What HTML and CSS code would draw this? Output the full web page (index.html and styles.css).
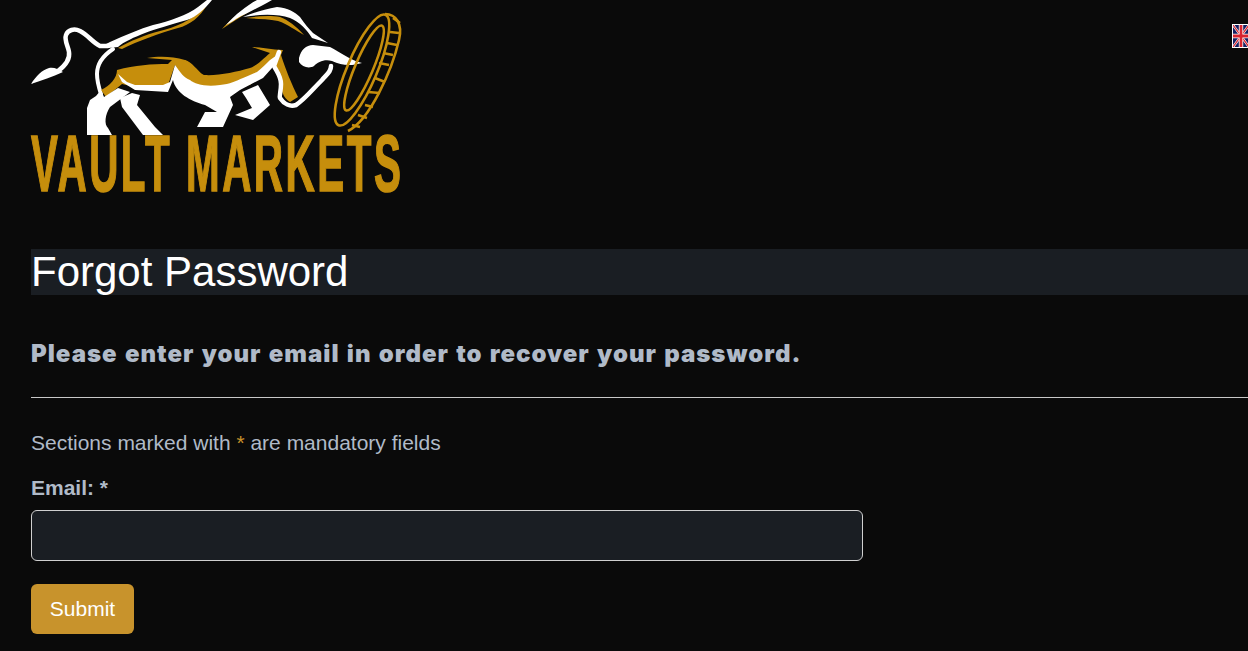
FILE: index.html
```html
<!DOCTYPE html>
<html lang="en">
<head>
<meta charset="utf-8">
<title>Forgot Password</title>
<link rel="stylesheet" href="styles.css">
</head>
<body>
<main class="page">
  <header class="top">
    <svg class="logo" viewBox="31 0 371 192" width="371" height="192" role="img" aria-label="Vault Markets">
      <g class="art">
        <!-- tail and back line -->
        <path class="fill-w" d="M31 84 C36 76 42 70 49 68 C54 67 58 69 63 72 C52 77 42 80 31 84 Z"/>
        <path class="line-w tail" d="M58 71 C66 65 70 58 69 52 C68 46 64 40 66 35 C68 30 74 28 80 31 C88 35 92 42 100 46 L108 46"/>
        <path class="fill-g" d="M118 48 C130 41 145 35 160 31 C175 27 190 22 207 5 C200 17 190 25 178 28 C160 33 138 41 122 49 Z"/>
        <path class="fill-w" d="M104 45 L110 42 C125 35 140 29 153 25 C170 21 187 15 198 7 L207 0 L212 0 C205 9 196 17 187 20 C170 25 155 29 145 33 C135 37 123 42 118 47 L108 48 Z"/>
        <!-- rear arc and leg -->
        <path class="line-w arc" d="M113 49 C104 55 97 64 97 74 C97 82 99 88 101 94"/>
        <!-- gold body -->
        <path class="fill-g" d="M117 70 C135 65 152 64 168 64 L172 60 L147 58 C158 56 172 56 185 60 C192 62 197 70 203 75 L214 82 L180 82 L175 65 L168 85 L135 87 L122 84 L106 97 L101 90 C110 86 117 78 117 70 Z"/>
        <path class="fill-g" d="M185 60 C193 64 197 72 204 75 C218 76 236 72 250 68 C258 65 264 58 270 53 L252 47 C262 47 272 50 283 50 L281 55 C285 68 292 85 298 97 L290 102 C283 98 281 90 280 80 C278 72 276 65 272 62 L250 85 L205 88 L190 82 L180 70 Z"/>
        <!-- white belly band -->
        <path class="fill-w" d="M118 74 L127 82 L135 85 L163 85 L170 82 L175 65 C180 72 184 78 190 80 C195 84 205 87 220 85 C230 84 236 81 243 78 C248 76 252 74 257 72 C262 68 266 64 270 60 L280 53 L272 68 L263 78 L240 90 L230 97 L233 105 L223 127 L197 127 L205 112 L217 112 L205 105 C190 101 176 93 173 80 L168 92 L135 90 L122 82 Z"/>
        <!-- rear leg -->
        <path class="fill-w" d="M101 90 L104 97 L118 88 L130 92 L110 107 C105 115 104 124 108 128 L112 135 L87 135 L87 108 L90 100 L96 96 Z"/>
        <!-- middle leg -->
        <path class="fill-w" d="M120 98 L132 93 L140 95 L137 105 L155 127 L163 135 L143 135 L122 107 Z"/>
        <!-- front leg -->
        <path class="fill-w" d="M242 92 L258 85 L270 105 L253 120 L235 115 L252 108 L246 98 Z"/>
        <!-- upper arcs -->
        <path class="fill-g" d="M222 29 C230 20 242 10 256 3 L262 4 C248 12 236 20 222 29 Z"/>
        <path class="fill-w" d="M226 25 C236 14 246 6 257 0 L272 0 C258 8 245 14 236 19 C232 22 229 23 226 25 Z"/>
        <path class="fill-g" d="M246 18 C258 16 270 15 280 17 C288 20 296 26 304 35 C296 31 288 24 278 21 C268 19 256 19 246 18 Z"/>
        <path class="fill-w" d="M243 17 C255 12 266 9 277 7 C288 8 295 12 300 17 C305 24 309 29 313 33 L328 43 L312 38 C307 30 300 22 290 18 C278 14 262 14 243 17 Z"/>
        <!-- horn -->
        <path class="fill-w" d="M299 58 C301 50 306 45 313 45 L330 47 C340 52 350 60 362 63 C352 66 342 66 332 61 C324 59 318 62 314 66 C309 69 302 67 299 62 Z"/>
        <!-- muzzle -->
        <path class="line-w snout" d="M279 52 L274 66 C277 72 281 76 281 84 C281 92 279 96 280 98 C284 104 290 107 296 105 C304 100 312 90 322 80 C327 74 331 72 331 66"/>
        <!-- coin -->
        <g class="coin">
          <ellipse cx="362" cy="70" rx="15" ry="60" transform="rotate(23 362 70)"/>
          <ellipse cx="364" cy="68" rx="9" ry="46" transform="rotate(23 364 68)"/>
          <path d="M385 14 C396 14 403 24 399 40 C392 70 370 120 348 131"/>
          <path d="M393 18 L400 23 M390 32 L399 33 M387 43 L397 45 M383 53 L393 55 M379 63 L389 65 M375 78 L385 82 M368 92 L380 93 M365 105 L373 107 M358 115 L367 118 M352 125 L360 127"/>
        </g>
      </g>
      <g transform="translate(31 191) scale(.505 1)">
        <text class="word">VAULT MARKETS</text>
      </g>
    </svg>
    <svg class="flag" viewBox="0 0 16 22" width="16" height="22" role="img" aria-label="English">
      <rect width="16" height="22" fill="#141f63"/>
      <path d="M0 0 L16 22 M16 0 L0 22" stroke="#fff" stroke-width="2.4"/>
      <path d="M0 0 L16 22 M16 0 L0 22" stroke="#d8232f" stroke-width="1.2"/>
      <path d="M8 0 V22 M0 11 H16" stroke="#fff" stroke-width="4.4"/>
      <path d="M8 0 V22 M0 11 H16" stroke="#d8232f" stroke-width="2.8"/>
    </svg>
  </header>

  <h1 class="title">Forgot Password</h1>
  <h2 class="lead">Please enter your email in order to recover your password.</h2>
  <hr class="rule">
  <p class="note">Sections marked with <span class="star">*</span> are mandatory fields</p>
  <form class="form">
    <label class="label" for="email">Email: *</label>
    <input class="input" id="email" type="email">
    <button class="submit" type="button">Submit</button>
  </form>
</main>
</body>
</html>
```
FILE: styles.css
```css
html, body {
  margin: 0;
  padding: 0;
  height: 100%;
  overflow: hidden;
  background: #0a0a0a;
}
body {
  font-family: "Liberation Sans", Arial, sans-serif;
  color: #b0bac8;
}
.page {
  padding-left: 31px;
}
.top {
  display: flex;
  justify-content: space-between;
  align-items: flex-start;
  margin-right: -2px;
}
.logo {
  display: block;
  overflow: visible;
}
.art {
  filter: blur(0.35px);
}
.fill-w { fill: #fff; }
.fill-g { fill: #c68e0c; }
.line-w {
  fill: none;
  stroke: #fff;
  stroke-linecap: round;
  stroke-linejoin: round;
}
.tail { stroke-width: 4.5; }
.arc { stroke-width: 4; }
.snout { stroke-width: 4.5; }
.coin ellipse, .coin path {
  fill: none;
  stroke: #c68e0c;
  stroke-width: 2.6;
}
.word {
  font-family: "Liberation Sans", Arial, sans-serif;
  font-weight: 700;
  font-size: 80px;
  letter-spacing: 5px;
  fill: #c68e0c;
  stroke: #c68e0c;
  stroke-width: 1.6;
}
.flag {
  display: block;
  margin-top: 24px;
  border: 1px solid #fff;
}
.title {
  margin: 57px 0 0;
  font-size: 42px;
  line-height: 46px;
  font-weight: 400;
  color: #fff;
  background: #1a1e23;
}
.lead {
  margin: 45px 0 0;
  font-family: Inter, "Liberation Sans", sans-serif;
  font-size: 24px;
  line-height: 28px;
  font-weight: 900;
  letter-spacing: 1px;
  word-spacing: 1.5px;
}
.rule {
  margin: 29px 0 0;
  border: 0;
  border-top: 1px solid #c8c8c8;
}
.note {
  margin: 33px 0 0;
  font-size: 21px;
  line-height: 23px;
}
.star { color: #c8922a; }
.form {
  display: flex;
  flex-direction: column;
  align-items: flex-start;
}
.label {
  margin-top: 22px;
  font-size: 21px;
  line-height: 23px;
  font-weight: 700;
}
.input {
  box-sizing: border-box;
  width: 832px;
  height: 51px;
  margin-top: 11px;
  background: #1a1e23;
  border: 1px solid #d0d0d0;
  border-radius: 6px;
}
.submit {
  width: 103px;
  height: 50px;
  margin-top: 23px;
  border: 0;
  border-radius: 6px;
  background: #c8932c;
  color: #fff;
  font-family: inherit;
  font-size: 21px;
}
```
